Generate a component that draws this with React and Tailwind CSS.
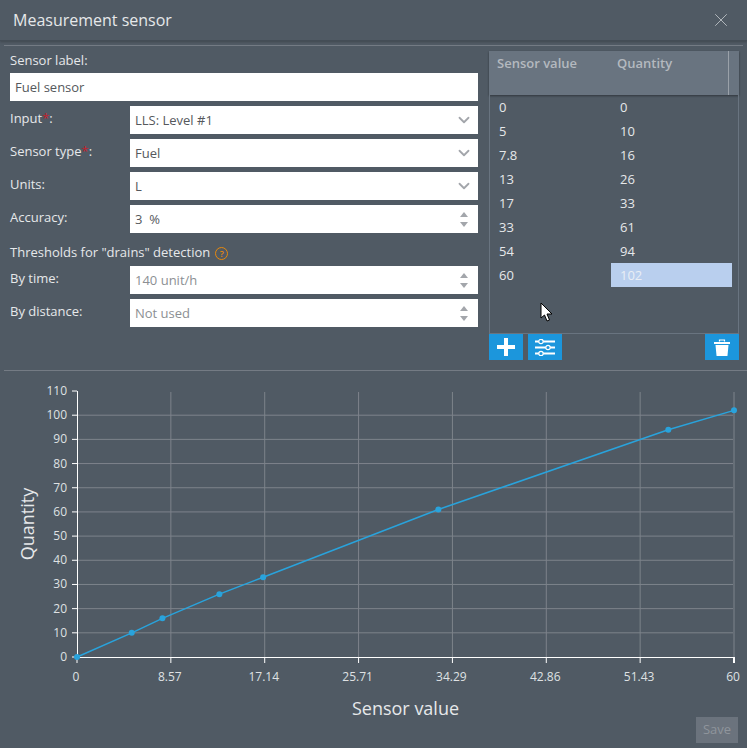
import React from 'react';
import { ChevronDown, X } from 'lucide-react';

const tableRows = [
    ['0', '0'],
    ['5', '10'],
    ['7.8', '16'],
    ['13', '26'],
    ['17', '33'],
    ['33', '61'],
    ['54', '94'],
    ['60', '102'],
];

const xLabels = ['0', '8.57', '17.14', '25.71', '34.29', '42.86', '51.43', '60'];
const yLabels = [0, 10, 20, 30, 40, 50, 60, 70, 80, 90, 100, 110];

const px = (v) => 77 + v * 10.95;
const py = (q) => 657 - q * 2.418;

const Spinner = () => (
    <svg width="8" height="17" viewBox="0 0 8 17" className="shrink-0 -mt-[2px]">
        <path d="M4 1 L8 6 L0 6 Z" fill="#a3a6ab" />
        <path d="M4 16 L8 11 L0 11 Z" fill="#a3a6ab" />
    </svg>
);

const Field = ({ label, required, value, kind, muted }) => (
    <div className="flex items-center h-7">
        <div className="w-[120px] shrink-0 text-[13px] text-[#e6e8ea] -mt-[2px]">
            {label}
            {required && <span className="text-[#c4202c]">*</span>}
            :
        </div>
        <div className={`flex-1 h-7 bg-white flex items-center justify-between pt-[2px] pl-[5px] pr-[10px] text-[13px] ${muted ? 'text-[#8c8f93]' : 'text-[#55585c]'}`}>
            <span className="whitespace-pre">{value}</span>
            {kind === 'select' && <ChevronDown size={18} strokeWidth={2.4} className="text-[#a3a6ab] -mr-[5px] -mt-[3px]" />}
            {kind === 'number' && <Spinner />}
        </div>
    </div>
);

const PlusIcon = () => (
    <svg width="18" height="18" viewBox="0 0 18 18">
        <path d="M7 0h4v7h7v4h-7v7H7v-7H0V7h7z" fill="#fff" />
    </svg>
);

const SlidersIcon = () => (
    <svg width="20" height="17" viewBox="0 0 20 17">
        <path d="M0 2.5h20M0 8.5h20M0 14.5h20" stroke="#fff" strokeWidth="2" />
        <circle cx="6" cy="2.5" r="2.2" fill="#1c96dc" stroke="#fff" strokeWidth="1.2" />
        <circle cx="13" cy="8.5" r="2.2" fill="#1c96dc" stroke="#fff" strokeWidth="1.2" />
        <circle cx="6" cy="14.5" r="2.2" fill="#1c96dc" stroke="#fff" strokeWidth="1.2" />
    </svg>
);

const TrashIcon = () => (
    <svg width="16" height="17" viewBox="0 0 16 17">
        <path d="M5.5 2.5V1h5v1.5" fill="none" stroke="#fff" strokeWidth="1.2" />
        <path d="M0 3h16v2H0z" fill="#fff" />
        <path d="M1.5 6h13l-1 10.5a.5.5 0 0 1-.5.5H3a.5.5 0 0 1-.5-.5z" fill="#fff" />
    </svg>
);

const Chart = () => (
    <svg viewBox="0 371 747 352" className="block w-[747px] h-[352px]" style={{ fontFamily: '"Open Sans", sans-serif' }}>
        {yLabels.map((q) => (
            <g key={q}>
                {q > 0 && q < 110 && <line x1="77" x2="733" y1={py(q)} y2={py(q)} stroke="#7d838b" />}
                <line x1="72" x2="77" y1={py(q)} y2={py(q)} stroke="#fff" />
                <text x="67" y={py(q) + 4} textAnchor="end" fontSize="12" fill="#dfe1e3">{q}</text>
            </g>
        ))}
        {xLabels.map((label, i) => {
            const x = 77 + (i * 657) / 7;
            return (
                <g key={label}>
                    {i > 0 && <line x1={x} x2={x} y1="392" y2="657" stroke="#7d838b" />}
                    <line x1={x} x2={x} y1="657" y2="663" stroke="#fff" strokeWidth={i === 7 ? 2 : 1} />
                    <text x={i === 0 ? 76 : x - 1} y="681" textAnchor="middle" fontSize="12" fill="#dfe1e3">{label}</text>
                </g>
            );
        })}
        <line x1="77.5" x2="77.5" y1="391" y2="657" stroke="#fff" />
        <line x1="77" x2="735" y1="657.5" y2="657.5" stroke="#fff" />
        <polyline
            points={tableRows.map(([v, q]) => `${px(+v)},${py(+q)}`).join(' ')}
            fill="none"
            stroke="#29a3dc"
            strokeWidth="1.5"
        />
        {tableRows.map(([v, q]) => (
            <circle key={v} cx={px(+v)} cy={py(+q)} r="3" fill="#29a3dc" />
        ))}
        <text x="405.5" y="715" textAnchor="middle" fontSize="18" fill="#e6e8ea">Sensor value</text>
        <text transform="translate(34 524) rotate(-90)" textAnchor="middle" fontSize="18" fill="#e6e8ea">Quantity</text>
    </svg>
);

const App = () => {
    return (
        <div className="relative w-[747px] h-[748px] overflow-hidden bg-[#505a64] text-[13px]" style={{ fontFamily: '"Open Sans", sans-serif' }}>
            <div className="h-[41px] flex items-center justify-between pl-[13px] pr-[15px] border-b border-[#444d56] shadow-[0_1px_2px_rgba(0,0,0,0.2)]">
                <h1 className="text-base text-[#e6e8ea]">Measurement sensor</h1>
                <X size={22} strokeWidth={0.8} className="text-[#d5d8db]" />
            </div>

            <div className="mx-[4px] mt-[4px] h-[1px] bg-[#747b84]" />

            <div className="flex h-[324px] pl-[10px] pr-[8px] pt-[5px]">
                <div className="w-[468px] shrink-0 flex flex-col">
                    <div className="h-[22px] leading-[18px] text-[#e6e8ea]">Sensor label:</div>
                    <div className="h-7 bg-white flex items-center pt-[2px] pl-[5px] text-[#55585c]">Fuel sensor</div>
                    <div className="mt-[5px] flex flex-col gap-[5px]">
                        <Field label="Input" required value="LLS: Level #1" kind="select" />
                        <Field label="Sensor type" required value="Fuel" kind="select" />
                        <Field label="Units" value="L" kind="select" />
                        <Field label="Accuracy" value="3  %" kind="number" />
                    </div>
                    <div className="h-[33px] pt-[7px] flex items-center gap-[5px] text-[#e6e8ea]">
                        <span>Thresholds for "drains" detection</span>
                        <span className="w-[13px] h-[13px] rounded-full border-[1.5px] border-[#e8890c] text-[#e8890c] text-[9px] leading-none font-semibold flex items-center justify-center">?</span>
                    </div>
                    <div className="flex flex-col gap-[5px]">
                        <Field label="By time" value="140 unit/h" kind="number" muted />
                        <Field label="By distance" value="Not used" kind="number" muted />
                    </div>
                </div>

                <div className="ml-[11px] w-[250px] shrink-0 flex flex-col">
                    <div className="h-[44px] bg-[#697480] flex font-semibold text-[#b4b9bf] shadow-[0_1px_2px_rgba(0,0,0,0.4)]">
                        <div className="w-[120px] pl-2 pt-[3px]">Sensor value</div>
                        <div className="w-[120px] pl-2 pt-[3px] border-r border-[#9aa1a9]">Quantity</div>
                    </div>
                    <div className="h-[239px] border-x border-b border-[#697480]">
                        {tableRows.map(([v, q], i) => (
                            <div key={v} className="flex h-6 items-center text-[#e6e8ea]">
                                <div className="w-[121px] pl-[9px] pt-[2px]">{v}</div>
                                <div className={`w-[121px] h-6 flex items-center pl-[9px] pt-[2px] ${i === 7 ? 'bg-[#b9cfee] text-[#e9eef5]' : ''}`}>{q}</div>
                            </div>
                        ))}
                    </div>
                    <div className="flex items-center gap-[5px]">
                        <button className="w-[34px] h-[26px] bg-[#1c96dc] flex items-center justify-center">
                            <PlusIcon />
                        </button>
                        <button className="w-[34px] h-[26px] bg-[#1c96dc] flex items-center justify-center">
                            <SlidersIcon />
                        </button>
                        <button className="ml-auto w-[34px] h-[26px] bg-[#1c96dc] flex items-center justify-center">
                            <TrashIcon />
                        </button>
                    </div>
                </div>
            </div>

            <div className="ml-[4px] h-[1px] bg-[#747b84]" />

            <Chart />

            <div className="flex justify-end pr-[9px] -mt-[6px]">
                <button className="w-[42px] h-[26px] bg-[#6b737d] text-[#8f959c] text-[13px]">Save</button>
            </div>

            {/* mouse pointer caught in the screenshot */}
            <svg width="13" height="21" viewBox="0 0 13 21" className="absolute left-[540px] top-[302px]">
                <path d="M1 1 L1 16 L4.5 13 L7 19 L9.5 18 L7 12 L12 12 Z" fill="#fff" stroke="#000" strokeWidth="1" />
            </svg>
        </div>
    );
};

export default App;
